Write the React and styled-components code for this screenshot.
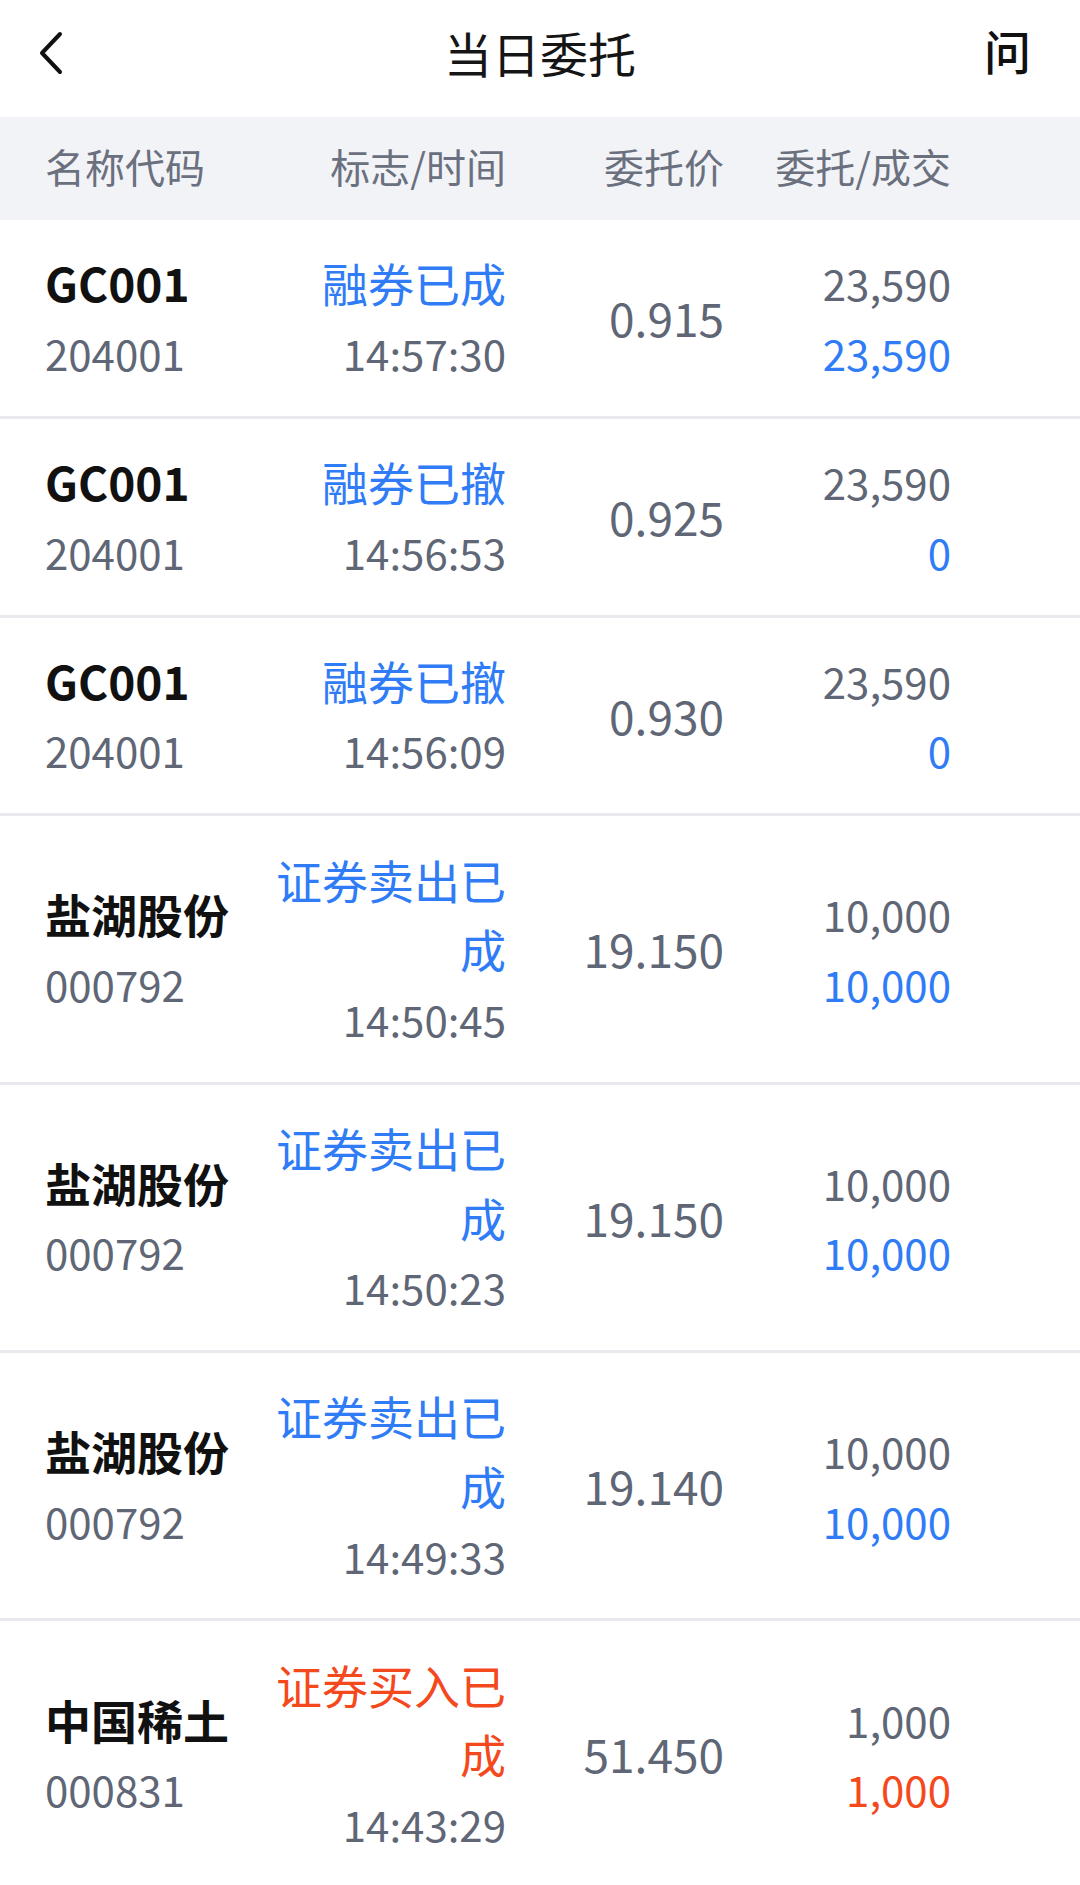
import React from 'react'
import styled, { createGlobalStyle } from 'styled-components'

const GlobalStyle = createGlobalStyle`
  html, body {
    margin: 0;
    padding: 0;
    background: #fff;
    font-family: "Noto Sans CJK SC", "Noto Sans", sans-serif;
  }
`

const orders = [
  { name: 'GC001', code: '204001', flag: '融券已成', time: '14:57:30', price: '0.915', qty: '23,590', deal: '23,590', side: 'buy' },
  { name: 'GC001', code: '204001', flag: '融券已撤', time: '14:56:53', price: '0.925', qty: '23,590', deal: '0', side: 'buy' },
  { name: 'GC001', code: '204001', flag: '融券已撤', time: '14:56:09', price: '0.930', qty: '23,590', deal: '0', side: 'buy' },
  { name: '盐湖股份', code: '000792', flag: '证券卖出已成', time: '14:50:45', price: '19.150', qty: '10,000', deal: '10,000', side: 'buy' },
  { name: '盐湖股份', code: '000792', flag: '证券卖出已成', time: '14:50:23', price: '19.150', qty: '10,000', deal: '10,000', side: 'buy' },
  { name: '盐湖股份', code: '000792', flag: '证券卖出已成', time: '14:49:33', price: '19.140', qty: '10,000', deal: '10,000', side: 'buy' },
  { name: '中国稀土', code: '000831', flag: '证券买入已成', time: '14:43:29', price: '51.450', qty: '1,000', deal: '1,000', side: 'sell' },
]

const sideColor = { buy: '#2f7cf6', sell: '#f4481d' }

export default function App() {
  return (
    <>
      <GlobalStyle />
      <Page>
        <NavBar>
          <BackButton aria-label="back">
            <svg width="30" height="46" viewBox="0 0 30 46" fill="none">
              <path d="M24 3 L6 22 L24 41" stroke="#111" strokeWidth="4" strokeLinecap="round" strokeLinejoin="round" />
            </svg>
          </BackButton>
          <Title>当日委托</Title>
          <AskButton>问</AskButton>
        </NavBar>

        <HeadRow>
          <HeadCell>名称代码</HeadCell>
          <HeadCell $right>标志/时间</HeadCell>
          <HeadCell $right>委托价</HeadCell>
          <HeadCell $right>委托/成交</HeadCell>
        </HeadRow>

        {orders.map((o, i) => (
          <Row key={i}>
            <NameCell>
              <Name>{o.name}</Name>
              <Num>{o.code}</Num>
            </NameCell>
            <RightCell>
              <Flag $color={sideColor[o.side]}>{o.flag}</Flag>
              <Num>{o.time}</Num>
            </RightCell>
            <PriceCell>{o.price}</PriceCell>
            <RightCell>
              <Num>{o.qty}</Num>
              <Num $color={sideColor[o.side]}>{o.deal}</Num>
            </RightCell>
          </Row>
        ))}
      </Page>
    </>
  )
}

const Page = styled.div`
  width: 1080px;
  min-height: 1885px;
  background: #fff;
`

const NavBar = styled.div`
  height: 117px;
  display: flex;
  align-items: center;
  justify-content: space-between;
  padding: 0 49px 0 36px;
  box-sizing: border-box;
  position: relative;
`

const BackButton = styled.div`
  display: flex;
  align-items: center;
  height: 50px;
  margin-top: -10px;
`

const Title = styled.h1`
  position: absolute;
  left: 0;
  right: 0;
  top: 0;
  margin: 0;
  line-height: 104px;
  text-align: center;
  font-size: 48px;
  font-weight: 400;
  color: #151515;
  pointer-events: none;
`

const AskButton = styled.div`
  font-size: 47px;
  font-weight: 500;
  color: #111;
  margin-top: -18px;
`

const grid = `
  display: grid;
  grid-template-columns: 221px 240px 218px 227px;
  padding: 0 129px 0 45px;
`

const HeadRow = styled.div`
  ${grid}
  height: 103px;
  align-items: center;
  background: #f2f3f7;
`

const HeadCell = styled.div`
  font-size: 40px;
  line-height: 48px;
  margin-top: -6px;
  color: #6a707e;
  text-align: ${p => (p.$right ? 'right' : 'left')};
  white-space: nowrap;
`

const Row = styled.div`
  ${grid}
  padding-top: 28.3px;
  padding-bottom: 28.3px;
  border-bottom: 3px solid #e8e9ed;
  align-items: center;
  font-size: 46px;
  line-height: 69.6px;
`

const NameCell = styled.div`
  display: flex;
  flex-direction: column;
`

const Name = styled.div`
  font-weight: 700;
  color: #111;
  white-space: nowrap;
`

const Num = styled.div`
  font-size: 42px;
  color: ${p => p.$color || '#5f6675'};
`

const RightCell = styled.div`
  text-align: right;
`

const Flag = styled.div`
  color: ${p => p.$color};
`

const PriceCell = styled.div`
  text-align: right;
  color: #5f6675;
`
